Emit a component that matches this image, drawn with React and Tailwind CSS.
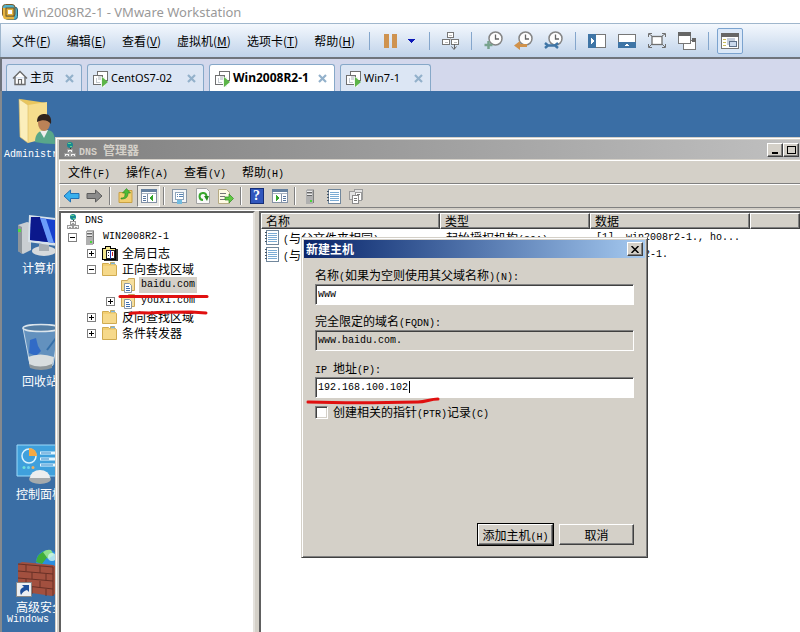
import React from "react";

const CJK = /([\u3000-\u9fff]+)/;

/* Song-style bitmap text: 12px ideographs beside 6px-wide latin letters. */
function T({ children }) {
  return (
    <span className="inline-flex h-4 items-baseline whitespace-nowrap font-['Noto_Sans_CJK_SC',sans-serif] text-[12px] leading-4">
      {children.split(CJK).map((part, i) =>
        part === "" ? null : CJK.test(part) ? (
          <span key={i}>{part}</span>
        ) : (
          <span key={i} className="whitespace-pre font-['Liberation_Mono',monospace] text-[10px] leading-4">
            {part}
          </span>
        )
      )}
    </span>
  );
}

const Icon = ({ w = 16, h = 16, crisp = true, children }) => (
  <svg
    width={w}
    height={h}
    viewBox={`0 0 ${w} ${h}`}
    fill="none"
    className="block shrink-0"
    shapeRendering={crisp ? "crispEdges" : "auto"}
    aria-hidden="true"
  >
    {children}
  </svg>
);

/* ---------- VMware icons ---------- */

const VmLogo = () => (
  <Icon crisp={false}>
    <rect x="3" y="3" width="12.500" height="12.500" rx="3" fill="#4fb0c8" stroke="#2a5f78" />
    <rect x=".5" y=".5" width="12.500" height="12.500" rx="3" fill="#52b2cb" stroke="#7a5a28" />
    <path d="M2.500 4v8q0 2 2 2H12" stroke="#e6b540" strokeWidth="3" />
    <rect x="4" y="4" width="8" height="8" fill="#e6b540" stroke="#6b5524" />
    <rect x="6" y="6" width="4" height="4" fill="#fff" />
  </Icon>
);

const HomeIcon = () => (
  <Icon crisp={false}>
    <path d="M1 8.500 8 1.500l7 7M3 7v7.500h10V7" stroke="#6a6a6a" strokeWidth="1.400" fill="#fff" />
    <path d="M6.500 14.500v-5h3v5" stroke="#6a6a6a" strokeWidth="1.200" />
  </Icon>
);

const VmTabIcon = () => (
  <Icon w={17} h={17}>
    <path d="M5.500 10.500v-9h10v9z" stroke="#707070" fill="#fff" />
    <path d="M1.500 5.500h9v9h-9z" stroke="#707070" fill="#fff" />
    <path d="M6 6h4v4H6z" fill="#d5d9dc" />
    <path d="M4 8v4h4" stroke="#c5cbd0" />
    <path d="M9 7h4v10H9z" fill="#eef5ee" />
    <path d="M10 7l6 5-6 5z" fill="#5cb548" shapeRendering="auto" />
  </Icon>
);

const TabClose = () => (
  <Icon w={9} h={9} crisp={false}>
    <path d="M1 1l7 7M8 1 1 8" stroke="#93b1cb" strokeWidth="2.200" />
  </Icon>
);

const PauseIcon = () => (
  <Icon w={14} h={14}>
    <path d="M0 0h5v14H0zM8 0h5v14H8z" fill="#cf9350" />
  </Icon>
);

const SendIcon = () => (
  <Icon w={17} h={18}>
    <path d="M5.500 .5h6v5h-6zM.5 7.500h7v5h-7zM9.500 7.500h7v5h-7z" stroke="#777" fill="#fff" />
    <path d="M8.500 6v2M3 10h3M12 10h3M7 3h3" stroke="#bbb" />
    <path d="M12 12v5" stroke="#666" />
    <path d="M9.500 14.500l2.500 3 2.500-3" stroke="#666" shapeRendering="auto" />
  </Icon>
);

const ClockIcon = ({ children }) => (
  <Icon w={19} h={19} crisp={false}>
    <circle cx="11.500" cy="7.500" r="6.500" fill="#fdfdfd" stroke="#858585" strokeWidth="1.500" />
    <path d="M11.500 3.500V8H15" stroke="#666" strokeWidth="1.300" />
    {children}
  </Icon>
);

const SidebarIcon = () => (
  <Icon w={18} h={14}>
    <path d="M8 .5h9.500v13H8" fill="#fff" stroke="#777" />
    <path d="M0 0h8v14H0z" fill="#3f75a6" />
    <path d="M3 4l3 3-3 3z" fill="#fff" />
  </Icon>
);

const BottomBarIcon = () => (
  <Icon w={18} h={14}>
    <path d="M.5 .5h17V9H.5z" fill="#fff" stroke="#777" />
    <path d="M0 8h18v6H0z" fill="#3f75a6" />
    <path d="M6 12l3-2 3 2z" fill="#fff" />
  </Icon>
);

const FullscreenIcon = () => (
  <Icon w={18} h={15} crisp={false}>
    <rect x="4" y="3.500" width="10" height="8" fill="#fff" stroke="#707070" strokeWidth="1.300" />
    <path d="M.5 4V.5H4M14 .5h3.500V4M17.500 11v3.500H14M4 14.500H.5V11M1 1l3 2M17 1l-3 2M1 14l3-3M17 14l-3-3" stroke="#707070" />
  </Icon>
);

const UnityIcon = () => (
  <Icon w={18} h={18}>
    <path d="M5.500 8.500h12v9h-12z" fill="#fff" stroke="#777" />
    <path d="M.5 .5h12v11H.5z" fill="#fff" stroke="#777" />
    <path d="M0 0h13v4H0zM14 6h4v4h-4z" fill="#666" />
  </Icon>
);

const ThumbIcon = () => (
  <Icon w={18} h={16}>
    <path d="M.5 .5h17v15H.5z" fill="#fff" stroke="#777" />
    <path d="M0 0h18v4H0z" fill="#666" />
    <path d="M2 6.500h3M2 9.500h3M2 12.500h3" stroke="#c9bd5e" />
    <path d="M6 5h8v7H6z" fill="#c6cfdd" />
    <path d="M8.500 8.500h7v5h-7z" fill="#cbd9ec" stroke="#5e7088" />
  </Icon>
);

/* ---------- MMC icons ---------- */

const DnsIcon = () => (
  <Icon w={13} h={15}>
    <circle cx="6" cy="3" r="3" fill="#168a92" shapeRendering="auto" />
    <path d="M4 1h3v1H4zM6 4h2v1H6z" fill="#67d08a" />
    <path d="M6.500 6v2" stroke="#333" />
    <path d="M3.500 7.500h5v3h-5zM.5 11.500h5v3h-5zM6.500 11.500h5v3h-5z" fill="#f4f4f4" stroke="#9a9a9a" />
    <path d="M5 9h2M2 13h2M8 13h2" stroke="#999" />
  </Icon>
);

const ServerIcon = () => (
  <Icon w={9} h={15}>
    <path d="M0 1l2-1h6v14l-2 1H0z" fill="#b0b0b0" />
    <path d="M7 1h1v13H7z" fill="#808080" />
    <path d="M1 2.500h5M1 5.500h5" stroke="#eee" />
    <path d="M1 3.500h5M1 6.500h5" stroke="#666" />
    <path d="M4 11h2v2H4z" fill="#49d838" />
  </Icon>
);

const FolderIcon = () => (
  <Icon w={15} h={14} crisp={false}>
    <path d="M.5 1.500h6l1 1h1v-2h4v2h1l1 1v10H.5z" fill="#f3cf72" stroke="#d0ab50" />
    <path d="M9 1.500h4" stroke="#7eb4dc" strokeWidth="1.500" />
    <path d="M1 4h13v9H1z" fill="#f6d98a" />
  </Icon>
);

const ZoneIcon = () => (
  <Icon w={15} h={15} crisp={false}>
    <path d="M.5 2.500h6l1-2h6v12H.5z" fill="#f6df9e" stroke="#c9a75a" />
    <path d="M3.500 5.500h5l2 2v7h-7z" fill="#fff" stroke="#8a97a4" />
    <path d="M5 8.500h3M5 10.500h4M5 12.500h4" stroke="#3e6fb0" />
  </Icon>
);

const LogIcon = () => (
  <Icon w={16} h={15}>
    <path d="M.5 2.500h3v-2h5v2h5v11H.5z" fill="#f1e48c" stroke="#000" />
    <path d="M14 3h2v12H2v-1h12z" fill="#333" />
    <path d="M4.500 4.500h8v8h-8z" fill="#fff" stroke="#222" />
    <path d="M8.500 4v9" stroke="#223fbd" />
    <path d="M6 6h1v1H6zM6 9h1v1H6z" fill="#222" />
    <path d="M10 6h1v4h-1z" fill="#c22" />
  </Icon>
);

const RecordIcon = () => (
  <Icon w={14} h={15}>
    <path d="M1.500 .5h12v14h-12z" fill="#fff" stroke="#71879c" />
    <path d="M3 3.500h9M3 5.500h9M3 7.500h9M3 9.500h9M3 11.500h9" stroke="#7cacd4" />
    <path d="M0 2.500h2M0 5.500h2M0 8.500h2M0 11.500h2" stroke="#456" />
  </Icon>
);

const ArrowIcon = ({ flip }) => (
  <Icon w={17} h={14} crisp={false}>
    {flip ? (
      <path d="M16 7 9.500 1v3.500H1v5h8.500V13z" fill="#8b8b8b" stroke="#5c5c5c" />
    ) : (
      <path d="M1 7l6.500-6v3.500H16v5H7.500V13z" fill="#38b0ee" stroke="#2170b4" />
    )}
  </Icon>
);

const UpFolderIcon = () => (
  <Icon crisp={false}>
    <path d="M1 4.500h6l1-2h6v12H1z" fill="#f2cf70" stroke="#c9a145" />
    <path d="M3 10c4 0 4-2 4-5H4.500L8.500 .5l4 4.500H10c0 5-3 6-7 6z" fill="#4fba36" stroke="#2f8520" strokeWidth=".6" />
  </Icon>
);

const PaneIcon = ({ right }) => (
  <Icon w={16} h={14}>
    <path d="M.5 .5h15v13H.5z" fill="#fff" stroke="#8492a6" />
    <path d="M0 0h16v3H0z" fill="#65809f" />
    <path d="M1 4.500h14" stroke="#a9b3c0" />
    {right ? (
      <>
        <path d="M9.500 5v8" stroke="#8492a6" />
        <path d="M11 7.500h3M11 9.500h3M11 11.500h3" stroke="#5a78a0" />
        <path d="M4 6v6l4-3z" fill="#35a52b" />
      </>
    ) : (
      <>
        <path d="M6.500 5v8" stroke="#8492a6" />
        <path d="M2 7.500h3M2 9.500h3M2 11.500h3" stroke="#5a78a0" />
        <path d="M12 6v6L8 9z" fill="#35a52b" />
      </>
    )}
  </Icon>
);

const PropsIcon = () => (
  <Icon w={15} h={15}>
    <path d="M.5 .5h14v13H.5z" fill="#f4f6f8" stroke="#8796a6" />
    <path d="M3.500 3.500h8v7h-8z" fill="#fff" stroke="#8fa6bc" />
    <path d="M5 5.500h1M5 7.500h1M7 5.500h4M7 7.500h4" stroke="#5683b4" />
    <path d="M5 11h5v4H5z" fill="#72bce0" />
  </Icon>
);

const RefreshIcon = () => (
  <Icon w={14} h={16} crisp={false}>
    <path d="M.5 .5h10l3 3v12H.5z" fill="#fafafa" stroke="#a3a3a3" />
    <path d="M7 12A3.500 3.500 0 1 1 10.500 8" stroke="#38a72e" strokeWidth="2" />
    <path d="M8 8h5l-2 5z" fill="#238a20" />
  </Icon>
);

const ExportIcon = () => (
  <Icon w={16} h={15} crisp={false}>
    <path d="M.5 .5h8l3 3v11H.5z" fill="#fffbe5" stroke="#b6ab83" />
    <path d="M2 4.500h6M2 7.500h5M2 10.500h5" stroke="#777" />
    <path d="M7 8h4V5l4.500 4.500L11 14v-3H7z" fill="#60c943" stroke="#318a22" strokeWidth=".7" />
  </Icon>
);

const HelpIcon = () => (
  <span className="flex h-4 w-[14px] items-center justify-center border border-[#152e78] bg-[#3157bd] font-['Liberation_Serif',serif] text-[14px] font-bold leading-4 text-white">
    ?
  </span>
);

const DocsIcon = () => (
  <Icon w={15} h={15}>
    <path d="M.5 2.500h5v-2h8v10H.5z" fill="#e4e4e4" stroke="#9b9b9b" />
    <path d="M6.500 3.500h6v8h-6z" fill="#fff" stroke="#9b9b9b" />
    <path d="M3.500 6.500h6v8h-6z" fill="#fff" stroke="#8b8b8b" />
    <path d="M5 9.500h3M5 11.500h3M8 5.500h3" stroke="#777" />
  </Icon>
);

/* ---------- Desktop icons ---------- */

const UserFolder = () => (
  <Icon w={48} h={48} crisp={false}>
    <path d="M4 2l27 4v34L14 44z" fill="#e9c65e" />
    <path d="M12 8l19-3v36L12 46z" fill="#f6dd8c" />
    <path d="M3 2l9 6v38l-8-6z" fill="#fbeebb" stroke="#d8b95f" strokeWidth=".6" />
    <path d="M19 45c0-8 4-12 11-12s9 4 9 14c-8 0-14-1-20-2z" fill="#58a78a" />
    <path d="M24 34l4 7 4-8z" fill="#eee" />
    <ellipse cx="28" cy="26" rx="6" ry="8" fill="#bb8257" />
    <path d="M21 25c0-7 4-8 8-8s7 3 6 10c-3-4-8-5-14-2z" fill="#30231d" />
  </Icon>
);

const Computer = () => (
  <Icon w={48} h={48} crisp={false}>
    <path d="M2 15l9-3 4 1v27l-8 4-5-3z" fill="#c9ced2" />
    <path d="M2 15l4 2v27l-4-3z" fill="#8d959b" />
    <path d="M2 19h3v3H2z" fill="#4ddd43" />
    <ellipse cx="28" cy="41" rx="12" ry="5" fill="#d6dadd" />
    <path d="M23 34h10v7H23z" fill="#a7aeb4" />
    <path d="M13 5l35 4v28l-36-5z" fill="#d8e2ea" />
    <path d="M15 7l33 4v23l-34-4z" fill="#1740cd" />
    <path d="M15 7h9l8 25-18-2z" fill="#0b188c" />
    <path d="M24 8l6 1 8 24-6-1z" fill="#6c9dfa" />
  </Icon>
);

const RecycleBin = () => (
  <Icon w={48} h={48} crisp={false}>
    <path d="M7 5h36l-6 37q-12 7-23 0z" fill="#7fa9cf" fillOpacity=".6" stroke="#c4d8e8" />
    <path d="M14 17l6-2 2 8 3 5-5 5-7-3z" fill="#205fc8" fillOpacity=".75" />
    <path d="M12 34q12-5 26 0l-2 9q-10 4-22 0z" fill="#d9dedf" />
    <path d="M13 41q11 5 23 0v4q-11 4-22 0z" fill="#8f979a" />
    <ellipse cx="25" cy="5" rx="18" ry="3.500" fill="#537da4" stroke="#dbe5ec" strokeWidth="1.500" />
    <path d="M40 15l-9 12" stroke="#356fa8" strokeWidth="2" />
  </Icon>
);

const ControlPanel = () => (
  <Icon w={48} h={48} crisp={false}>
    <path d="M1 9h47v31H1z" fill="#3fa0dc" stroke="#9cdafa" />
    <circle cx="13" cy="20" r="7" stroke="#d8f2ff" strokeWidth="1.500" />
    <path d="M13 20v-8a8 8 0 0 1 8 8z" fill="#f5a944" />
    <path d="M24 17h24M24 23h24M24 29h24" stroke="#e4f6ff" strokeWidth="3" />
    <path d="M25 17h10M25 23h8M25 29h12" stroke="#2d83c7" />
    <circle cx="8" cy="31.500" r="1.500" fill="#74e0d6" />
    <circle cx="12.500" cy="31.500" r="1.500" fill="#6cd5f0" />
    <circle cx="17" cy="31.500" r="1.500" fill="#f0b060" />
    <ellipse cx="24" cy="43" rx="11" ry="5" fill="#a5aaac" />
    <path d="M14 42a10 8 0 0 1 20 0z" fill="#eceeee" />
  </Icon>
);

const Firewall = () => (
  <Icon w={48} h={48} crisp={false}>
    <circle cx="32" cy="13" r="12" fill="#2a8ee0" />
    <path d="M20 13q1-9 11-12l2 5-4 5-3 4z" fill="#3fae3a" />
    <path d="M27 3q4-3 8-2l3 5-6 4z" fill="#8fe08c" />
    <circle cx="36" cy="8" r="4" fill="#cdf6f0" fillOpacity=".8" />
    <path d="M2 15l4-2 31 3 2 1v28l-3 2-34-5z" fill="#a2503f" />
    <path d="M2 15l35 3v29M2 22l35 3M2 29l35 3M2 36l35 4M10 16v6M24 17v7M16 23v7M30 25v7M10 30v6M24 32v7M16 38v7M30 40v7" stroke="#683026" />
    <path d="M.5 33.500h15v14H.5z" fill="#eceff2" stroke="#888" />
    <path d="M5 46c-2-5 0-7 3-8l-2-2h7v7l-2-2c-3 1-4 2-6 5z" fill="#1d4f9b" />
  </Icon>
);

const desktopItems = [
  { icon: UserFolder, lines: ["Administr..."] },
  { icon: Computer, lines: ["计算机"] },
  { icon: RecycleBin, lines: ["回收站"] },
  { icon: ControlPanel, lines: ["控制面板"] },
  { icon: Firewall, lines: ["高级安全", "Windows ..."] },
];

/* ---------- VMware chrome ---------- */

const vmMenus = [
  ["文件", "F"],
  ["编辑", "E"],
  ["查看", "V"],
  ["虚拟机", "M"],
  ["选项卡", "T"],
  ["帮助", "H"],
];

const VmSep = () => <span className="h-[18px] w-px shrink-0 bg-[#84a6cc]" />;

function VmMenuBar() {
  return (
    <div className="flex h-[34px] items-center border-l border-t border-[#9fb6cc] bg-linear-to-b from-[#f4f8fd] to-[#c0d3ea] pl-[11px]">
      <nav className="flex gap-4">
        {vmMenus.map(([name, key]) => (
          <button key={key} className="whitespace-nowrap text-[12px] leading-4 text-black">
            {name}(<u>{key}</u>)
          </button>
        ))}
      </nav>
      <div className="ml-[14px] flex items-center">
        <VmSep />
        <button className="ml-[14px]" aria-label="Pause"><PauseIcon /></button>
        <button className="ml-[10px] mr-[14px]" aria-label="Power options">
          <Icon w={7} h={4}><path d="M0 0h7L3.500 4z" fill="#0c18b8" /></Icon>
        </button>
        <VmSep />
        <button className="mx-3" aria-label="Send keys"><SendIcon /></button>
        <VmSep />
        <div className="mx-3 flex gap-[11px]">
          <button aria-label="Take snapshot">
            <ClockIcon><path d="M4.500 10v8M.5 14h8" stroke="#78a38e" strokeWidth="2.500" /></ClockIcon>
          </button>
          <button aria-label="Revert snapshot">
            <ClockIcon><path d="M0 14.500 6 10v3h7v3H6v3z" fill="#d0924c" /></ClockIcon>
          </button>
          <button aria-label="Manage snapshots">
            <ClockIcon>
              <path d="M1 12l3 2.500L1 17M4 14.500h7M14 12l-3 2.500 3 2.500" stroke="#3f75a6" strokeWidth="2.500" />
            </ClockIcon>
          </button>
        </div>
        <VmSep />
        <div className="mx-3 flex items-center gap-3">
          <button aria-label="Show library"><SidebarIcon /></button>
          <button aria-label="Show thumbnails"><BottomBarIcon /></button>
          <button aria-label="Full screen"><FullscreenIcon /></button>
          <button aria-label="Unity"><UnityIcon /></button>
        </div>
        <VmSep />
        <button
          className="ml-2 flex h-[26px] w-[26px] items-center justify-center rounded-[2px] border border-[#7ba3cf] bg-[#dbe8f8]"
          aria-label="Console view"
        >
          <ThumbIcon />
        </button>
      </div>
    </div>
  );
}

function VmTab({ className, icon, name, active }) {
  return (
    <div
      className={`flex h-[27px] items-center rounded-t-[3px] border border-b-0 border-[#86a8c8] pr-[7px] ${
        active ? "bg-white" : "bg-[#dce6f4]"
      } ${className}`}
    >
      <button
        role="tab"
        aria-selected={!!active}
        className={`flex flex-1 items-center gap-[2px] whitespace-nowrap text-left leading-4 text-black ${
          active ? "font-bold" : ""
        }`}
      >
        {icon}
        {name}
      </button>
      <button aria-label={`Close ${name}`}><TabClose /></button>
    </div>
  );
}

function VmTabs() {
  return (
    <div
      role="tablist"
      className="flex h-[34px] items-end gap-[5px] border-l-2 border-t-2 border-[#6f747c] bg-[#d3d8ec] pl-1 font-['Noto_Sans','Noto_Sans_CJK_SC',sans-serif]"
    >
      <VmTab className="w-[76px] pl-[5px] text-[12px]" icon={<HomeIcon />} name="主页" />
      <VmTab className="w-[117px] pl-1 text-[11px]" icon={<VmTabIcon />} name="CentOS7-02" />
      <VmTab className="w-[126px] pl-1 text-[12px]" icon={<VmTabIcon />} name="Win2008R2-1" active />
      <VmTab className="w-[91px] pl-1 text-[11px]" icon={<VmTabIcon />} name="Win7-1" />
    </div>
  );
}

/* ---------- DNS manager ---------- */

const Expander = ({ open }) => (
  <button aria-label={open ? "Collapse" : "Expand"} className="block">
    <Icon w={9} h={9}>
      <path d="M.5 .5h8v8h-8z" fill="#fff" stroke="#808080" />
      <path d={open ? "M2 4.500h5" : "M2 4.500h5M4.500 2v5"} stroke="#000" />
    </Icon>
  </button>
);

function TreeRow({ indent, expander, icon, text, selected }) {
  return (
    <li className={`flex h-4 items-center ${indent}`}>
      <span className="w-[15px] shrink-0">{expander}</span>
      <span className="flex w-[18px] shrink-0">{icon}</span>
      <span className={`flex h-4 items-center px-[2px] ${selected ? "bg-[#d4d0c8]" : ""}`}>
        <T>{text}</T>
      </span>
    </li>
  );
}

const ToolSep = () => <span className="mx-[3px] h-[18px] w-[2px] border-l border-r border-l-[#808080] border-r-white" />;

const Tool = ({ label, pressed, children }) => (
  <button
    aria-label={label}
    className={`flex h-[22px] w-[23px] items-center justify-center ${
      pressed ? "border border-b-white border-l-[#808080] border-r-white border-t-[#808080] bg-[#ebe9e4]" : ""
    }`}
  >
    {children}
  </button>
);

const CaptionButton = ({ label, children }) => (
  <button
    aria-label={label}
    className="flex h-[14px] w-4 items-center justify-center border border-b-[#404040] border-l-white border-r-[#404040] border-t-white bg-[#d4d0c8] shadow-[inset_-1px_-1px_#808080]"
  >
    {children}
  </button>
);

const headCell =
  "h-4 overflow-hidden border border-b-[#404040] border-l-white border-r-[#404040] border-t-white bg-[#d4d0c8] p-0 pl-1 text-left font-normal shadow-[inset_-1px_-1px_#808080]";

const HeadText = ({ children }) => (
  <span className="flex h-[14px] items-center"><T>{children}</T></span>
);

function DnsManager() {
  return (
    <section className="absolute bottom-0 left-[55px] right-0 top-[46px] flex flex-col border-l border-t border-[#d4d0c8] bg-[#d4d0c8] pl-[3px] pt-[2px] shadow-[inset_1px_1px_#ffffff]">
      <header className="flex h-[19px] shrink-0 items-center justify-between bg-linear-to-r from-[#808080] to-[#c0c0c0] pl-[5px] pr-px">
        <h1 className="flex items-center gap-[2px] font-bold text-[#d4d0c8]">
          <DnsIcon />
          <T>DNS 管理器</T>
        </h1>
        <div className="flex">
          <CaptionButton label="Minimize">
            <Icon w={8} h={8}><path d="M1 6h6v2H1z" fill="#000" /></Icon>
          </CaptionButton>
          <CaptionButton label="Maximize">
            <Icon w={9} h={9}><path d="M.5 1h8v7.500h-8zM0 1h9" stroke="#000" /></Icon>
          </CaptionButton>
        </div>
      </header>
      <nav className="mt-px flex h-6 shrink-0 items-center gap-4 border border-b-[#808080] border-l-white border-r-0 border-t-white pl-2">
        {["文件(F)", "操作(A)", "查看(V)", "帮助(H)"].map((m) => (
          <button key={m} className="flex"><T>{m}</T></button>
        ))}
      </nav>
      <div className="flex h-6 shrink-0 items-center border border-b-[#808080] border-l-white border-r-0 border-t-white">
        <Tool label="Back"><ArrowIcon /></Tool>
        <Tool label="Forward"><ArrowIcon flip /></Tool>
        <ToolSep />
        <Tool label="Up"><UpFolderIcon /></Tool>
        <Tool label="Console tree" pressed><PaneIcon /></Tool>
        <ToolSep />
        <Tool label="Properties"><PropsIcon /></Tool>
        <Tool label="Refresh"><RefreshIcon /></Tool>
        <Tool label="Export list"><ExportIcon /></Tool>
        <ToolSep />
        <Tool label="Help"><HelpIcon /></Tool>
        <Tool label="Action pane"><PaneIcon right /></Tool>
        <ToolSep />
        <Tool label="New server"><ServerIcon /></Tool>
        <Tool label="New record"><RecordIcon /></Tool>
        <Tool label="New zone"><DocsIcon /></Tool>
      </div>
      <div className="mt-[2px] flex min-h-0 flex-1 gap-1 border-t border-white">
        <ul className="w-[196px] shrink-0 overflow-hidden border-2 border-b-0 border-l-[#606060] border-r-[#e4e1dc] border-t-[#606060] bg-white">
          <li className="flex h-4 items-center gap-[5px] pl-[6px]">
            <DnsIcon />
            <T>DNS</T>
          </li>
          <TreeRow indent="pl-[7px]" expander={<Expander open />} icon={<span className="pl-[3px]"><ServerIcon /></span>} text="WIN2008R2-1" />
          <TreeRow indent="pl-[26px]" expander={<Expander />} icon={<LogIcon />} text="全局日志" />
          <TreeRow indent="pl-[26px]" expander={<Expander open />} icon={<FolderIcon />} text="正向查找区域" />
          <TreeRow indent="pl-[45px]" icon={<ZoneIcon />} text="baidu.com" selected />
          <TreeRow indent="pl-[45px]" expander={<Expander />} icon={<ZoneIcon />} text="youxi.com" />
          <TreeRow indent="pl-[26px]" expander={<Expander />} icon={<FolderIcon />} text="反向查找区域" />
          <TreeRow indent="pl-[26px]" expander={<Expander />} icon={<FolderIcon />} text="条件转发器" />
        </ul>
        <div className="min-w-0 flex-1 border-l-2 border-t-2 border-[#606060] bg-white">
          <table className="w-full table-fixed border-separate border-spacing-0">
            <colgroup>
              <col className="w-[179px]" />
              <col className="w-[150px]" />
              <col className="w-[160px]" />
              <col />
            </colgroup>
            <thead>
              <tr>
                <th className={headCell}><HeadText>名称</HeadText></th>
                <th className={headCell}><HeadText>类型</HeadText></th>
                <th className={headCell}><HeadText>数据</HeadText></th>
                <th className={headCell} aria-label="Blank" />
              </tr>
            </thead>
            <tbody>
              {[
                ["(与父文件夹相同)", "起始授权机构(SOA)", "[1], win2008r2-1., ho..."],
                ["(与父文件夹相同)", "名称服务器(NS)", "win2008r2-1."],
              ].map(([a, b, c]) => (
                <tr key={b} className="h-[17px]">
                  <td className="p-0 pl-1">
                    <span className="flex h-[17px] items-center gap-1"><RecordIcon /><T>{a}</T></span>
                  </td>
                  <td className="p-0 pl-[6px]"><span className="flex h-[17px] items-center"><T>{b}</T></span></td>
                  <td className="p-0 pl-[6px]"><span className="flex h-[17px] items-center"><T>{c}</T></span></td>
                  <td />
                </tr>
              ))}
            </tbody>
          </table>
        </div>
      </div>
    </section>
  );
}

/* ---------- New host dialog ---------- */

const field =
  "block h-[21px] w-full border border-b-white border-l-[#808080] border-r-white border-t-[#808080] px-[2px] font-['Liberation_Mono',monospace] text-[10px] leading-4 text-black shadow-[inset_1px_1px_#404040] outline-none";

const raised =
  "flex h-[21px] w-[75px] items-center justify-center border border-b-[#404040] border-l-white border-r-[#404040] border-t-white bg-[#d4d0c8] shadow-[inset_-1px_-1px_#808080]";

function NewHostDialog() {
  return (
    <section
      role="dialog"
      aria-labelledby="dlg-title"
      className="absolute left-[301px] top-[146px] w-[347px] border border-b-[#404040] border-l-[#d4d0c8] border-r-[#404040] border-t-[#d4d0c8] bg-[#d4d0c8] p-[2px] shadow-[inset_1px_1px_#ffffff,inset_-1px_-1px_#808080]"
    >
      <header className="flex h-[18px] items-center justify-between bg-linear-to-r from-[#0a246a] to-[#a6caf0] pl-[2px] pr-[2px]">
        <h2 id="dlg-title" className="flex font-bold text-white"><T>新建主机</T></h2>
        <CaptionButton label="Close">
          <Icon w={8} h={7} crisp={false}><path d="M.5 0l7 7M7.500 0l-7 7" stroke="#000" strokeWidth="1.500" /></Icon>
        </CaptionButton>
      </header>
      <form className="px-[11px] pb-[10px] pt-[9px]" onSubmit={(e) => e.preventDefault()}>
        <label htmlFor="host" className="mb-px flex"><T>名称(如果为空则使用其父域名称)(N):</T></label>
        <input id="host" className={`${field} bg-white`} defaultValue="www" />
        <label htmlFor="fqdn" className="mb-px mt-2 flex"><T>完全限定的域名(FQDN):</T></label>
        <input id="fqdn" readOnly className={`${field} bg-[#d4d0c8]`} defaultValue="www.baidu.com." />
        <label htmlFor="ip" className="mb-px mt-[9px] flex"><T>IP 地址(P):</T></label>
        <div className="relative">
          <input id="ip" className={`${field} bg-white`} defaultValue="192.168.100.102" />
          <span className="absolute left-[94px] top-1 h-3 w-px bg-black" />
        </div>
        <div className="mt-[6px] flex items-center gap-[5px]">
          <input
            id="ptr"
            type="checkbox"
            className="h-[13px] w-[13px] appearance-none border border-b-white border-l-[#808080] border-r-white border-t-[#808080] bg-white shadow-[inset_1px_1px_#404040,inset_-1px_-1px_#d4d0c8]"
          />
          <label htmlFor="ptr" className="flex"><T>创建相关的指针(PTR)记录(C)</T></label>
        </div>
        <div className="mt-[104px] flex justify-end gap-[6px]">
          <button type="submit" className="-m-px border border-black"><span className={raised}><T>添加主机(H)</T></span></button>
          <button type="button" className={raised}><T>取消</T></button>
        </div>
      </form>
    </section>
  );
}

/* Hand-drawn red marks laid over the tree and the address box. */
function Marks() {
  return (
    <>
      <svg className="pointer-events-none absolute left-[118px] top-[201px]" width="92" height="24" viewBox="0 0 92 24" fill="none" aria-hidden="true">
        <path d="M2 4.500h87" stroke="#e01010" strokeWidth="3" strokeLinecap="round" />
        <path d="M12 22c3-2 10-1 19-1 16-1 28-1 42-1l15 1" stroke="#e01010" strokeWidth="3" strokeLinecap="round" />
      </svg>
      <svg className="pointer-events-none absolute left-[305px] top-[305px]" width="136" height="10" viewBox="0 0 136 10" fill="none" aria-hidden="true">
        <path d="M3 6c30 1 70 1 110 0 8 0 12-3 20-3" stroke="#e01010" strokeWidth="3" strokeLinecap="round" />
      </svg>
    </>
  );
}

export default function App() {
  return (
    <div className="flex min-h-screen flex-col overflow-hidden bg-white font-['Noto_Sans_CJK_SC',sans-serif] text-[12px] text-black">
      <header className="flex h-[23px] items-center gap-[5px] pl-[2px]">
        <VmLogo />
        <h1 className="font-['Noto_Sans',sans-serif] text-[13px] leading-4 text-[#999]">Win2008R2-1 - VMware Workstation</h1>
      </header>
      <VmMenuBar />
      <VmTabs />
      <main className="relative flex-1 overflow-hidden border-l-2 border-[#85898e] bg-[#3a6ea5]">
        <ul className="w-[76px] pt-[6px]">
          {desktopItems.map(({ icon: Pic, lines }) => (
            <li key={lines[0]} className="flex h-[113px] flex-col items-center gap-[3px] text-white last:h-auto">
              <Pic />
              <span className="flex flex-col items-center">
                {lines.map((l) => (
                  <span key={l} className="flex h-[13px] items-center"><T>{l}</T></span>
                ))}
              </span>
            </li>
          ))}
        </ul>
        <div className="absolute inset-y-0 -left-[2px] right-0">
          <DnsManager />
          <NewHostDialog />
          <Marks />
        </div>
      </main>
    </div>
  );
}
